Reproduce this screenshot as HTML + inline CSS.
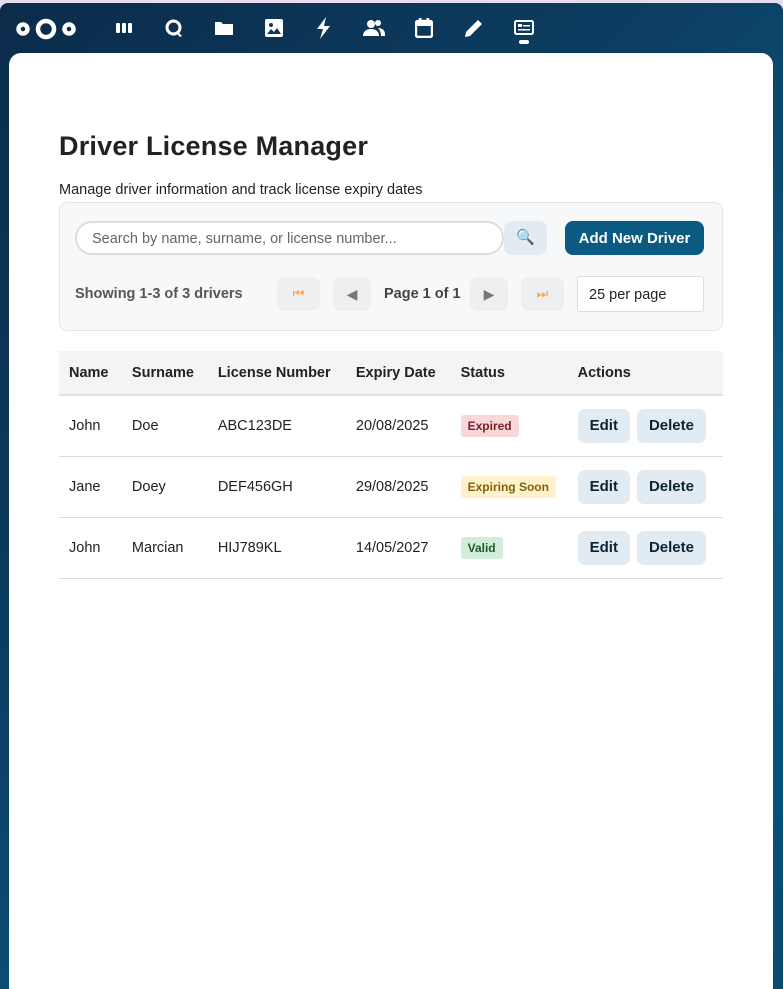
<!DOCTYPE html>
<html><head><meta charset="utf-8"><style>
*{box-sizing:border-box;margin:0;padding:0}
body{width:783px;height:989px;overflow:hidden;background:#e8dcef;font-family:"Liberation Sans",sans-serif;position:relative;color:#222}
#bg{position:absolute;left:0;top:3px;width:783px;height:986px;border-radius:8px 8px 0 0;background:linear-gradient(135deg,#0b2b4a 0%,#0c3f63 40%,#0b5a85 70%,#0a4a70 100%)}
#main{position:absolute;left:9px;top:53px;width:764px;height:936px;background:#fff;border-radius:12px 12px 0 0}
.ic{position:absolute;top:17px;fill:#fff}
.a{position:absolute}
h1{position:absolute;left:59px;top:131px;font-size:27px;font-weight:600;color:#222;letter-spacing:0.2px}
.sub{left:59px;top:182px;font-size:14.5px;color:#222}
.panel{left:59px;top:202px;width:664px;height:129px;background:#f7f8fa;border:1px solid #e4e6ea;border-radius:8px}
.search{left:75px;top:221px;width:429px;height:34px;border:2px solid #ddd;border-radius:17px;background:#fff;font-size:14.5px;color:#666;padding:8px 15px}
.sbtn{left:504px;top:221px;width:43px;height:34px;background:#e2ebf2;border-radius:8px;text-align:center;line-height:34px;font-size:15px}
.add{left:565px;top:221px;width:139px;height:34px;background:#0a5a81;border-radius:8px;color:#fff;font-weight:700;font-size:15px;text-align:center;line-height:35px}
.pg{top:277px;width:43px;height:34px;background:#eeeff0;border-radius:8px;text-align:center;line-height:34px;font-size:13px;color:#f5a860}
.sel{left:577px;top:276px;width:127px;height:36px;background:#fff;border:1px solid #ddd;border-radius:3px;font-size:14.5px;padding:10px 11px;color:#222}
table{position:absolute;left:59px;top:351px;width:664px;border-collapse:collapse;font-size:14.5px}
th{background:#f4f4f4;text-align:left;font-weight:700;height:44px;padding:0 10px;border-bottom:2px solid #e0e0e0;color:#222}
td{height:61px;padding:0 10px;border-bottom:1px solid #ddd;color:#222;white-space:nowrap}
.b{display:inline-block;font-size:12px;font-weight:700;padding:4px 7px;border-radius:3px}
.btn{display:inline-block;background:#e2ebf2;border-radius:7px;font-weight:700;font-size:15px;color:#0c2333;height:34px;line-height:34px;padding:0 12px;margin-right:7px}
</style></head><body>
<div id="bg"></div>
<svg class="ic" style="left:15px;top:16px" width="62" height="26" viewBox="0 0 62 26"><g fill="none" stroke="#fff" stroke-width="4.5"><circle cx="8" cy="13" r="4.5"/><circle cx="31" cy="13" r="8"/><circle cx="54" cy="13" r="4.5"/></g></svg>
<svg class="ic" style="left:116px;top:22px" width="16" height="12"><rect x="0" y="1" width="4" height="10" rx="1"/><rect x="6" y="1" width="4" height="10" rx="1"/><rect x="12" y="1" width="4" height="10" rx="1"/></svg>
<svg class="ic" style="left:164px;top:18px" width="20" height="20"><circle cx="9.5" cy="9.5" r="6.5" fill="none" stroke="#fff" stroke-width="3"/><path d="M13 13l5 5-2 1-4-4z"/></svg>
<svg class="ic" style="left:215px;top:20px" width="18" height="16"><path d="M0 2h6l2 2h10v11H0z"/></svg>
<svg class="ic" style="left:264px;top:18px" width="20" height="20"><rect x="1" y="1" width="18" height="18" rx="2"/><circle cx="7" cy="7" r="2" fill="#0c3a5c"/><path d="M3 16l4-5 3 3 3-4 4 6z" fill="#0c3a5c"/></svg>
<svg class="ic" style="left:315px;top:17px" width="18" height="22"><path d="M11 0L2 12h6l-3 10 10-13H9z"/></svg>
<svg class="ic" style="left:363px;top:19px" width="22" height="17"><circle cx="8" cy="5" r="4"/><path d="M0 17c0-5 4-7 8-7s8 2 8 7z"/><circle cx="15" cy="4" r="3"/><path d="M15 9c4 0 7 2 7 6v2h-4c0-3-1-6-3-8z"/></svg>
<svg class="ic" style="left:415px;top:18px" width="18" height="20"><rect x="1" y="3" width="16" height="16" rx="2" fill="none" stroke="#fff" stroke-width="2.5"/><rect x="1" y="3" width="16" height="5"/><rect x="4" y="0" width="2.5" height="5"/><rect x="11.5" y="0" width="2.5" height="5"/></svg>
<svg class="ic" style="left:465px;top:19px" width="18" height="18"><path d="M0 18l1-5L13 1l4 4L5 17z"/></svg>
<svg class="ic" style="left:514px;top:20px" width="20" height="16"><rect x="1" y="1" width="18" height="13" rx="1.5" fill="none" stroke="#fff" stroke-width="2"/><rect x="4" y="4" width="4" height="3"/><rect x="9" y="5" width="7" height="1.5"/><rect x="4" y="9" width="12" height="1.5"/></svg>
<div class="a" style="left:519px;top:40px;width:10px;height:4px;border-radius:2px;background:#fff"></div>
<div id="main"></div>
<h1>Driver License Manager</h1>
<div class="a sub">Manage driver information and track license expiry dates</div>
<div class="a panel"></div>
<div class="a search">Search by name, surname, or license number...</div>
<div class="a sbtn">🔍</div>
<div class="a add">Add New Driver</div>
<div class="a" style="left:75px;top:286px;font-size:14.5px;font-weight:700;color:#555">Showing 1-3 of 3 drivers</div>
<div class="a pg" style="left:277px">⏮</div>
<div class="a pg" style="left:333px;width:38px;color:#777;font-size:14px">◀</div>
<div class="a" style="left:384px;top:286px;font-size:14.5px;font-weight:700;color:#444">Page 1 of 1</div>
<div class="a pg" style="left:470px;width:38px;color:#777;font-size:14px">▶</div>
<div class="a pg" style="left:521px">⏭</div>
<div class="a sel">25 per page</div>
<table>
<tr><th style="width:63px">Name</th><th style="width:86px">Surname</th><th style="width:139px">License Number</th><th style="width:105px">Expiry Date</th><th style="width:117px">Status</th><th>Actions</th></tr>
<tr><td>John</td><td>Doe</td><td>ABC123DE</td><td>20/08/2025</td><td><span class="b" style="background:#f8d7da;color:#7a1e25">Expired</span></td><td><span class="btn">Edit</span><span class="btn">Delete</span></td></tr>
<tr><td>Jane</td><td>Doey</td><td>DEF456GH</td><td>29/08/2025</td><td><span class="b" style="background:#fff2cc;color:#80620a">Expiring Soon</span></td><td><span class="btn">Edit</span><span class="btn">Delete</span></td></tr>
<tr><td>John</td><td>Marcian</td><td>HIJ789KL</td><td>14/05/2027</td><td><span class="b" style="background:#d4edda;color:#1d5a2b">Valid</span></td><td><span class="btn">Edit</span><span class="btn">Delete</span></td></tr>
</table>
</body></html>
